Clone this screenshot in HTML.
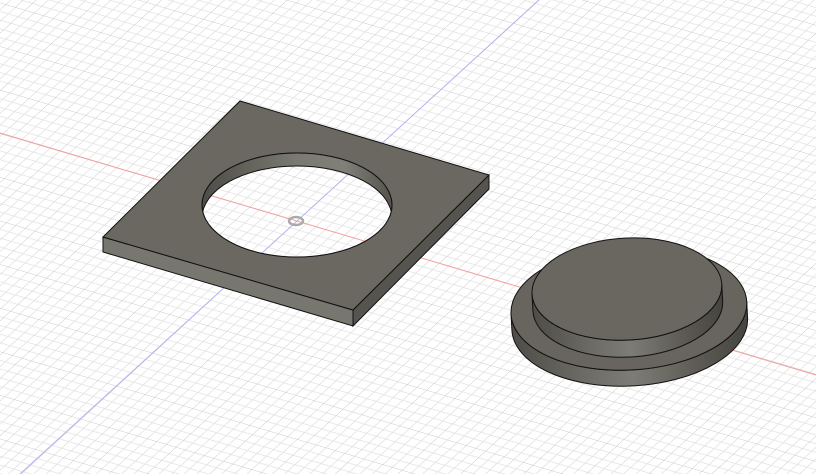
<!DOCTYPE html>
<html><head><style>html,body{margin:0;padding:0;background:#fff;overflow:hidden}svg{display:block}</style></head>
<body>
<svg width="816" height="474" viewBox="0 0 816 474" xmlns="http://www.w3.org/2000/svg">
<defs>
<pattern id="g" width="50" height="50" patternUnits="userSpaceOnUse" patternTransform="matrix(0.95 0.28 -0.72 0.66 297 221)">
<rect width="50" height="50" fill="#fff"/>
<g stroke="#e2e2e2" stroke-width="0.9">
<path d="M10 0V50M20 0V50M30 0V50M40 0V50M0 10H50M0 20H50M0 30H50M0 40H50"/>
</g>
<g stroke="#c4c4c4" stroke-width="1"><path d="M0 0V50M0 0H50"/></g>
</pattern>
<linearGradient id="wall" x1="0" x2="1">
<stop offset="0" stop-color="#4e4c46"/><stop offset="0.5" stop-color="#7a7a72"/><stop offset="0.75" stop-color="#808078"/><stop offset="1" stop-color="#55534c"/>
</linearGradient>
<linearGradient id="side" x1="0" x2="1">
<stop offset="0" stop-color="#4f4d47"/><stop offset="0.3" stop-color="#6c6b64"/><stop offset="0.5" stop-color="#7d7d75"/><stop offset="0.8" stop-color="#5a5851"/><stop offset="1" stop-color="#46443f"/>
</linearGradient>
<clipPath id="hole"><ellipse cx="297" cy="205" rx="95" ry="52"/></clipPath>
</defs>
<rect width="816" height="474" fill="url(#g)"/>
<line x1="0" y1="133" x2="816" y2="375" stroke="#f3a0a0" stroke-width="1"/>
<line x1="539" y1="0" x2="20" y2="474" stroke="#b4b4f0" stroke-width="1"/>

<!-- plate -->
<path d="M103 237L353 310L353 326L103 252Z" fill="#777770" stroke="#111" stroke-width="1"/>
<path d="M353 310L489 175L489 189L353 326Z" fill="#56544e" stroke="#111" stroke-width="1"/>
<path fill-rule="evenodd" d="M240 101L489 175L353 310L103 237Z M202 205a95 52 0 1 0 190 0a95 52 0 1 0 -190 0Z" fill="#6b6861" stroke="#111" stroke-width="1"/>
<g clip-path="url(#hole)">
<ellipse cx="297" cy="205" rx="95" ry="52" fill="url(#wall)"/>
<rect x="0" y="0" width="816" height="474" fill="url(#g)" clip-path="url(#inner)"/>
</g>
<clipPath id="inner"><ellipse cx="297" cy="218" rx="95" ry="52"/></clipPath>
<g clip-path="url(#hole)">
<g clip-path="url(#inner)">
<rect width="816" height="474" fill="url(#g)"/>
<line x1="0" y1="133" x2="816" y2="375" stroke="#f3a0a0" stroke-width="1"/>
<line x1="539" y1="0" x2="20" y2="474" stroke="#b4b4f0" stroke-width="1"/>
</g>
<ellipse cx="297" cy="218" rx="95" ry="52" fill="none" stroke="#111" stroke-width="1"/>
</g>
<ellipse cx="297" cy="205" rx="95" ry="52" fill="none" stroke="#111" stroke-width="1"/>
<ellipse cx="296" cy="221" rx="7" ry="4" fill="none" stroke="#aaa" stroke-width="2.5"/>

<!-- disc -->
<g transform="rotate(-3 629 310)">
<path d="M511 308a118 62 0 0 0 236 0v16a118 62 0 0 1 -236 0Z" fill="url(#side)" stroke="#111" stroke-width="1"/>
<ellipse cx="629" cy="308" rx="118" ry="62" fill="#67655e" stroke="#111" stroke-width="1"/>
<path d="M533 289a95 51 0 0 0 190 0v17a95 51 0 0 1 -190 0Z" fill="url(#side)" stroke="#111" stroke-width="1"/>
<ellipse cx="628" cy="289" rx="95" ry="51" fill="#6a6760" stroke="#111" stroke-width="1"/>
</g>
</svg>
</body></html>
